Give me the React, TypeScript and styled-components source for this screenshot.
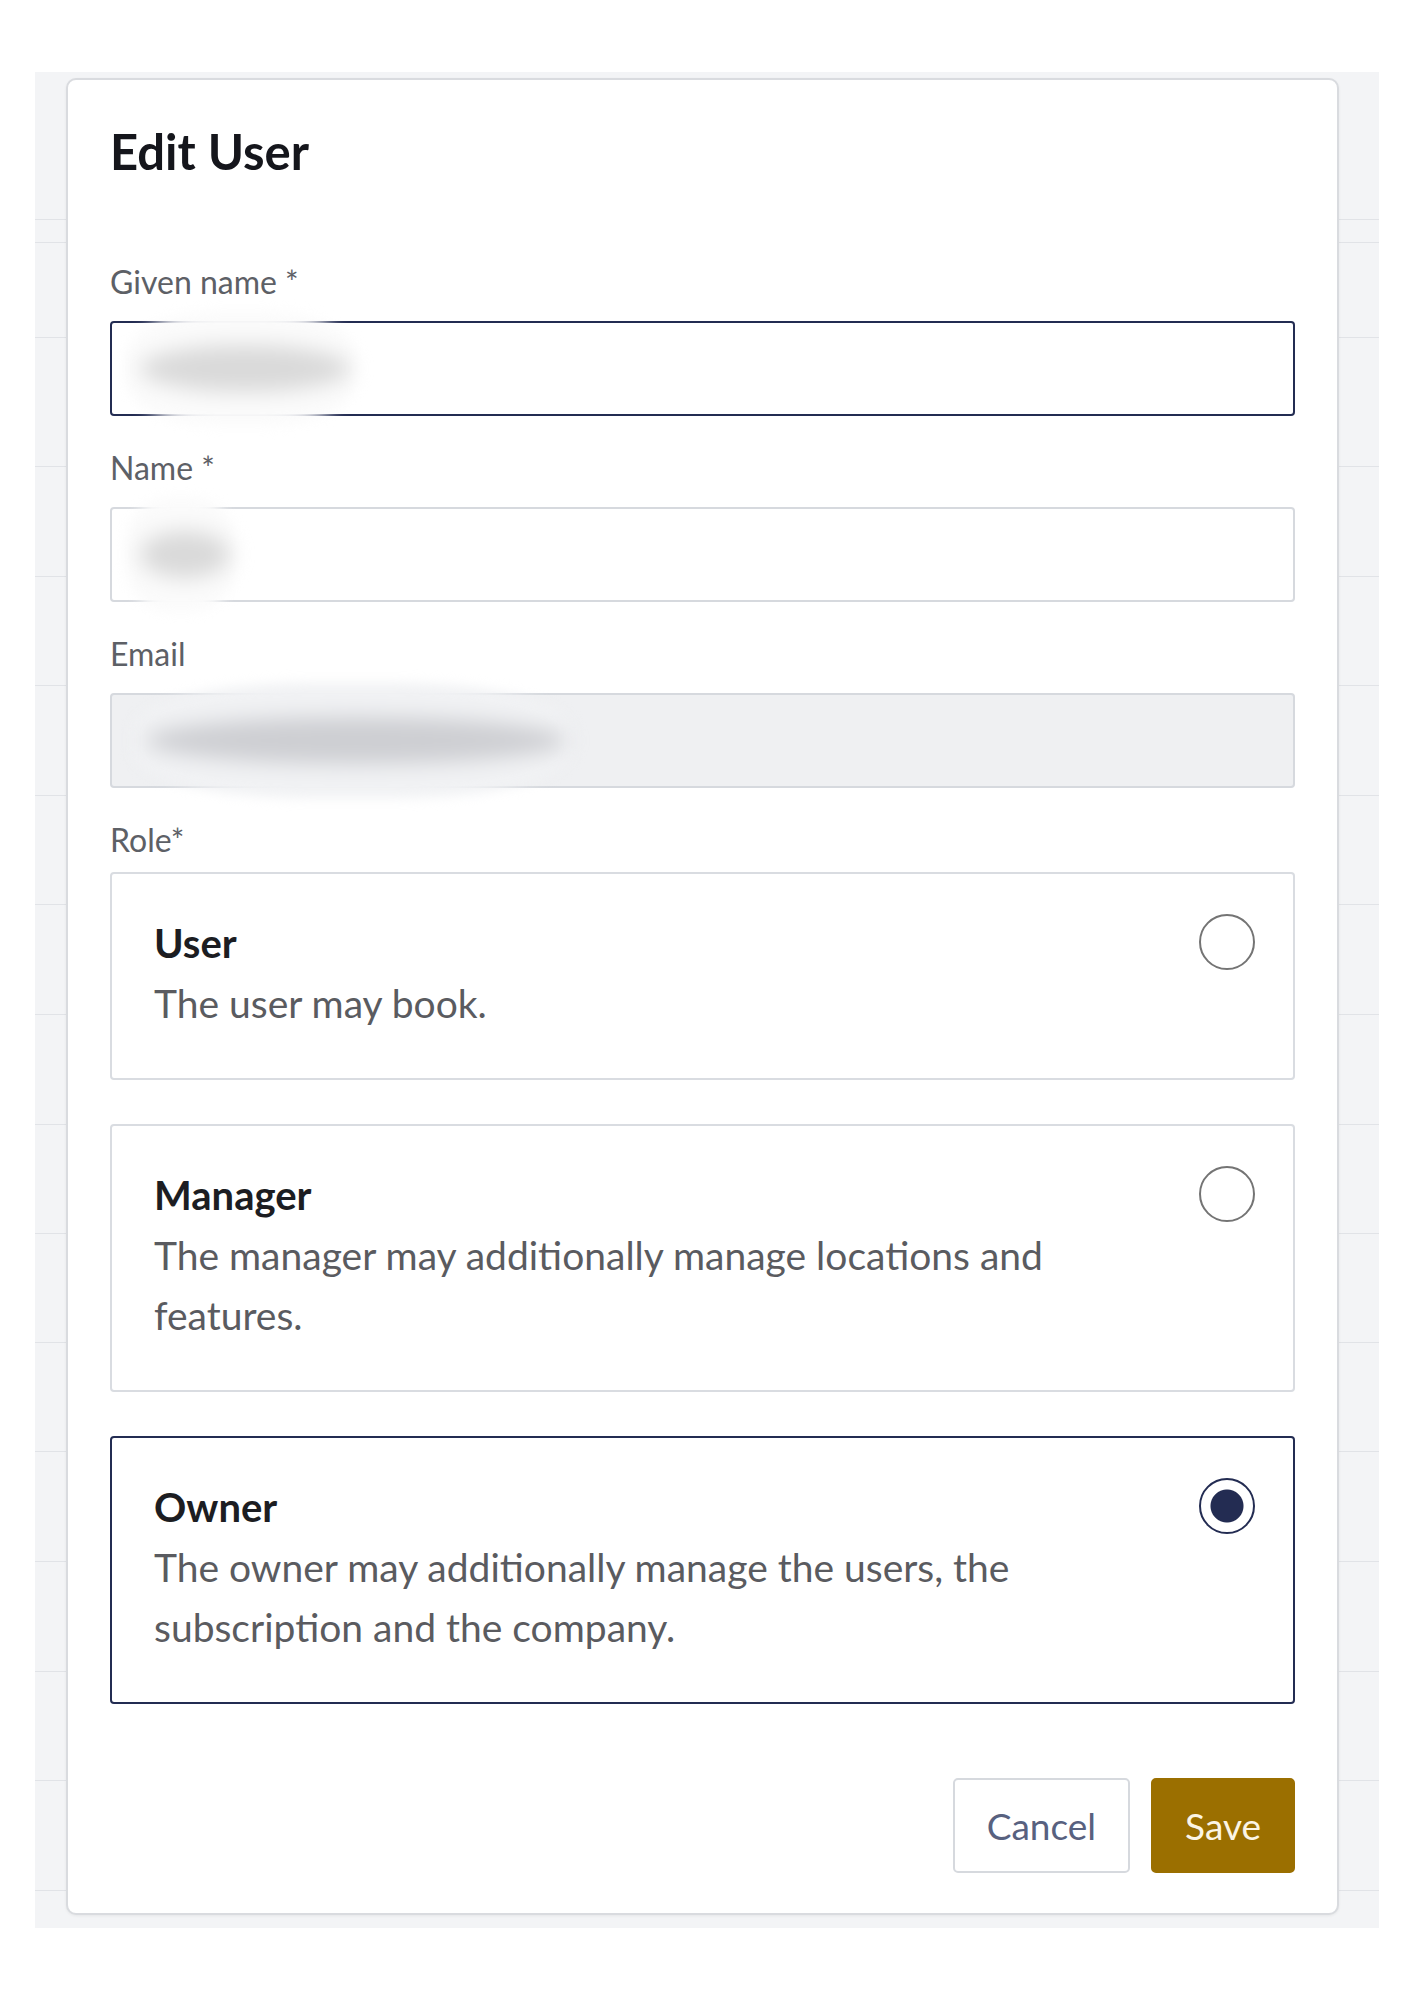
import React from 'react';
import styled, { createGlobalStyle } from 'styled-components';

const GlobalStyle = createGlobalStyle`
	html, body {
		margin: 0;
		padding: 0;
		background: #ffffff;
		font-family: 'Lato', 'Liberation Sans', sans-serif;
	}
	* {
		box-sizing: border-box;
	}
`;

const NAVY = '#232c52';

// row heights of the table that sits behind the dialog
const backgroundRows = [148, 23, 95, 129, 110, 109, 110, 109, 110, 110, 109, 109, 109, 110, 110, 109, 110];

const roles = [
	{ key: 'user', title: 'User', text: 'The user may book.' },
	{
		key: 'manager',
		title: 'Manager',
		text: 'The manager may additionally manage locations and features.',
	},
	{
		key: 'owner',
		title: 'Owner',
		text: 'The owner may additionally manage the users, the subscription and the company.',
	},
];

export default function App() {
	const selected = 'owner';

	return (
		<Page>
			<GlobalStyle />
			<Backdrop>
				{backgroundRows.map((h, i) => (
					<BackgroundRow key={i} $h={h} />
				))}
				<Dialog>
					<Title>Edit User</Title>

					<Field>
						<Label>Given name *</Label>
						<InputBox $focused>
							<Redaction $left={14} $width={230} />
						</InputBox>
					</Field>

					<Field>
						<Label>Name *</Label>
						<InputBox>
							<Redaction $left={14} $width={110} />
						</InputBox>
					</Field>

					<Field>
						<Label>Email</Label>
						<InputBox $disabled>
							<Redaction $left={20} $width={440} $disabled />
						</InputBox>
					</Field>

					<Label $tight>Role*</Label>
					<RoleList>
						{roles.map((role) => (
							<RoleCard key={role.key} $checked={role.key === selected}>
								<RoleText>
									<RoleTitle>{role.title}</RoleTitle>
									<RoleDescription>{role.text}</RoleDescription>
								</RoleText>
								<Radio $checked={role.key === selected} />
							</RoleCard>
						))}
					</RoleList>

					<Footer>
						<Button>Cancel</Button>
						<Button $primary>Save</Button>
					</Footer>
				</Dialog>
			</Backdrop>
		</Page>
	);
}

const Page = styled.div`
	padding: 72px 35px 72px 35px;
	width: 1414px;
`;

const Backdrop = styled.div`
	position: relative;
	width: 1344px;
	height: 1856px;
	background: #f3f4f6;
	overflow: hidden;
`;

const BackgroundRow = styled.div<{ $h: number }>`
	height: ${({ $h }) => $h}px;
	border-bottom: 1px solid #e1e3e7;
`;

const Dialog = styled.div`
	position: absolute;
	left: 31px;
	top: 6px;
	width: 1273px;
	display: flex;
	flex-direction: column;
	background: #ffffff;
	border: 2px solid #d9dbdf;
	border-radius: 10px;
	box-shadow: 0 1px 3px rgba(0, 0, 0, 0.06);
	padding: 41px 42px 40px 42px;
`;

const Title = styled.h1`
	margin: 0 0 81px 0;
	font-size: 49px;
	line-height: 60px;
	font-weight: 700;
	color: #15161c;
`;

const Field = styled.div`
	display: flex;
	flex-direction: column;
	margin-bottom: 32px;
`;

const Label = styled.label<{ $tight?: boolean }>`
	display: block;
	font-size: 32px;
	line-height: 40px;
	color: #5d6066;
	margin-bottom: ${({ $tight }) => ($tight ? '12px' : '19px')};
`;

const InputBox = styled.div<{ $focused?: boolean; $disabled?: boolean }>`
	position: relative;
	height: 95px;
	border: 2px solid ${({ $focused }) => ($focused ? NAVY : '#d6d9de')};
	border-radius: 4px;
	background: ${({ $disabled }) => ($disabled ? '#eff0f2' : '#ffffff')};
`;

const Redaction = styled.span<{ $left: number; $width: number; $disabled?: boolean }>`
	position: absolute;
	left: ${({ $left }) => $left}px;
	top: -12px;
	bottom: -12px;
	width: ${({ $width }) => $width}px;
	background: ${({ $disabled }) => ($disabled ? '#f1f2f4' : '#fbfbfb')};
	border-radius: 40%;
	filter: blur(6px);

	&::after {
		content: '';
		position: absolute;
		left: 14px;
		right: 6px;
		top: 34px;
		bottom: 34px;
		border-radius: 50%;
		background: ${({ $disabled }) => ($disabled ? '#cdced2' : '#d9d9d9')};
		filter: blur(9px);
	}
`;

const RoleList = styled.div`
	display: flex;
	flex-direction: column;
	gap: 44px;
`;

const RoleCard = styled.div<{ $checked: boolean }>`
	display: flex;
	justify-content: space-between;
	align-items: flex-start;
	border: 2px solid ${({ $checked }) => ($checked ? NAVY : '#d9dce1')};
	border-radius: 4px;
	padding: 39px 38px 45px 42px;
	background: #ffffff;
`;

const RoleText = styled.div`
	max-width: 940px;
`;

const RoleTitle = styled.div`
	font-size: 40px;
	line-height: 60px;
	font-weight: 700;
	color: #1c1d22;
`;

const RoleDescription = styled.div`
	font-size: 39px;
	line-height: 60px;
	color: #5a5b60;
`;

const Radio = styled.span<{ $checked: boolean }>`
	flex: none;
	margin-top: 1px;
	width: 56px;
	height: 56px;
	border-radius: 50%;
	border: 2px solid ${({ $checked }) => ($checked ? NAVY : '#747474')};
	background: ${({ $checked }) =>
		$checked ? `radial-gradient(circle, ${NAVY} 0 16px, #ffffff 17px)` : '#ffffff'};
`;

const Footer = styled.div`
	display: flex;
	justify-content: flex-end;
	gap: 21px;
	margin-top: 74px;
`;

const Button = styled.button<{ $primary?: boolean }>`
	height: 95px;
	padding: 0 32px;
	font-family: 'Lato', 'Liberation Sans', sans-serif;
	font-size: 37px;
	border-radius: 5px;
	border: 2px solid ${({ $primary }) => ($primary ? '#9b6f00' : '#d6d9de')};
	background: ${({ $primary }) => ($primary ? '#9b6f00' : '#ffffff')};
	color: ${({ $primary }) => ($primary ? '#fbf5e6' : '#58617f')};
	cursor: pointer;
`;
